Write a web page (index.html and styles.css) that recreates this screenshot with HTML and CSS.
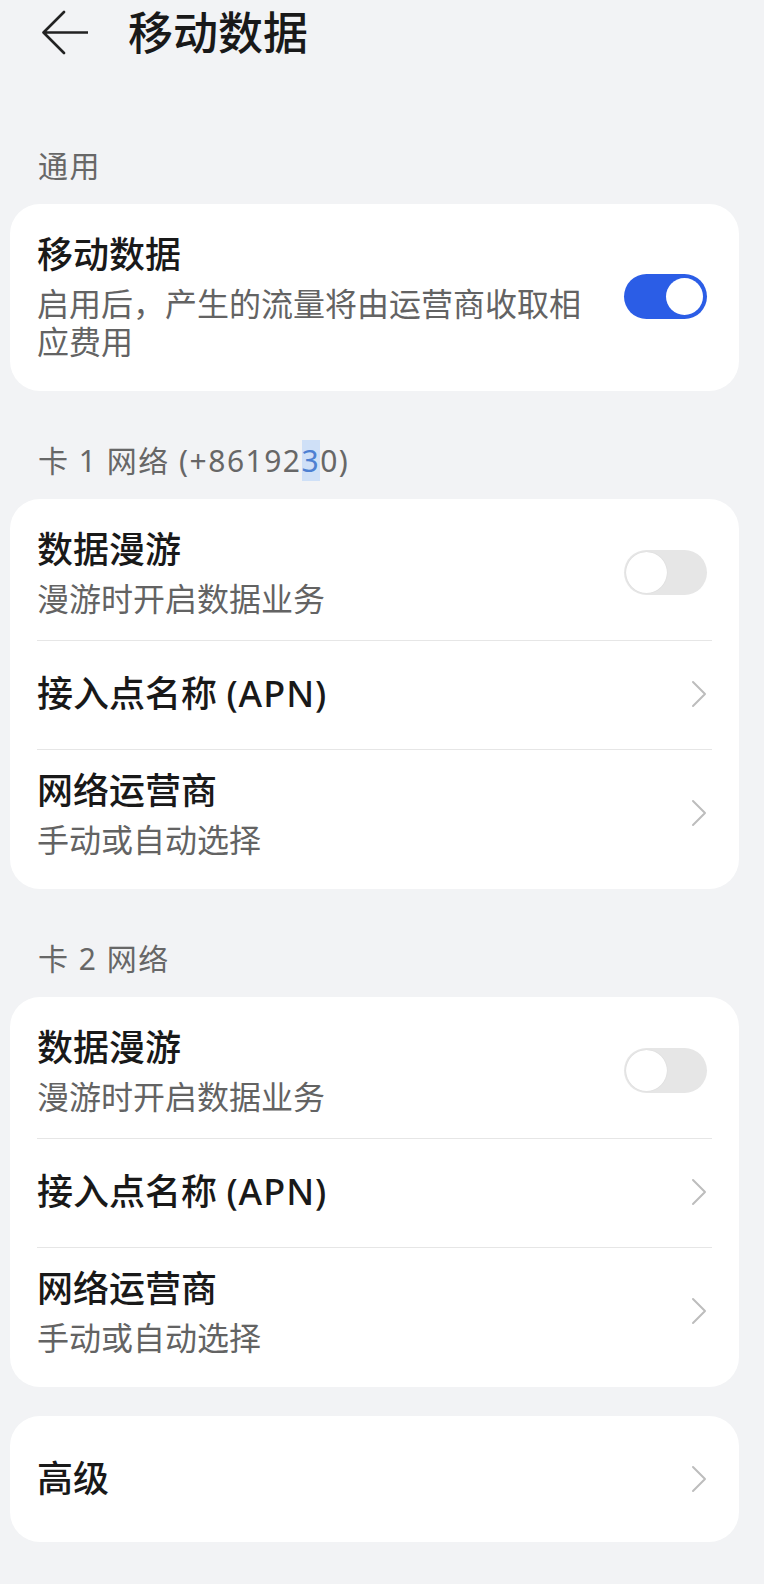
FILE: index.html
```html
<!DOCTYPE html>
<html lang="zh-CN">
<head>
    <meta charset="UTF-8">
    <meta name="viewport" content="width=device-width, initial-scale=1.0">
    <title>移动数据</title>
    <link rel="stylesheet" href="styles.css">
</head>
<body>
    <div class="page">
        <!-- Шапка -->
        <div class="topbar">
            <svg class="back" viewBox="0 0 46 46" width="46" height="46">
                <path d="M46 22.5H2M22 2L1.5 22.5L22 43" fill="none" stroke="#222" stroke-width="2.6" stroke-linecap="round" stroke-linejoin="round"/>
            </svg>
            <h1>移动数据</h1>
        </div>

        <div class="label first">通用</div>
        <div class="card">
            <div class="row">
                <div class="text">
                    <div class="title">移动数据</div>
                    <div class="sub">启用后，产生的流量将由运营商收取相应费用</div>
                </div>
                <div class="switch on"><span class="knob"></span></div>
            </div>
        </div>

        <div class="label">卡 1 网络 (+86192<span class="sel">3</span>0)</div>
        <div class="card">
            <div class="row">
                <div class="text">
                    <div class="title">数据漫游</div>
                    <div class="sub">漫游时开启数据业务</div>
                </div>
                <div class="switch"><span class="knob"></span></div>
            </div>
            <div class="row single">
                <div class="text">
                    <div class="title">接入点名称 <span class="latin">(APN)</span></div>
                </div>
                <svg class="chev" viewBox="0 0 16 28" width="16" height="28"><path d="M2 2L14 14L2 26" fill="none" stroke="#bdbdbd" stroke-width="2" stroke-linecap="round" stroke-linejoin="round"/></svg>
            </div>
            <div class="row">
                <div class="text">
                    <div class="title">网络运营商</div>
                    <div class="sub">手动或自动选择</div>
                </div>
                <svg class="chev" viewBox="0 0 16 28" width="16" height="28"><path d="M2 2L14 14L2 26" fill="none" stroke="#bdbdbd" stroke-width="2" stroke-linecap="round" stroke-linejoin="round"/></svg>
            </div>
        </div>

        <div class="label">卡 2 网络</div>
        <div class="card">
            <div class="row">
                <div class="text">
                    <div class="title">数据漫游</div>
                    <div class="sub">漫游时开启数据业务</div>
                </div>
                <div class="switch"><span class="knob"></span></div>
            </div>
            <div class="row single">
                <div class="text">
                    <div class="title">接入点名称 <span class="latin">(APN)</span></div>
                </div>
                <svg class="chev" viewBox="0 0 16 28" width="16" height="28"><path d="M2 2L14 14L2 26" fill="none" stroke="#bdbdbd" stroke-width="2" stroke-linecap="round" stroke-linejoin="round"/></svg>
            </div>
            <div class="row">
                <div class="text">
                    <div class="title">网络运营商</div>
                    <div class="sub">手动或自动选择</div>
                </div>
                <svg class="chev" viewBox="0 0 16 28" width="16" height="28"><path d="M2 2L14 14L2 26" fill="none" stroke="#bdbdbd" stroke-width="2" stroke-linecap="round" stroke-linejoin="round"/></svg>
            </div>
        </div>

        <div class="card last">
            <div class="row single">
                <div class="text">
                    <div class="title">高级</div>
                </div>
                <svg class="chev" viewBox="0 0 16 28" width="16" height="28"><path d="M2 2L14 14L2 26" fill="none" stroke="#bdbdbd" stroke-width="2" stroke-linecap="round" stroke-linejoin="round"/></svg>
            </div>
        </div>
    </div>
</body>
</html>
```

FILE: styles.css
```css
/* Общие стили */
body {
    margin: 0;
    background: #f2f3f5;
    font-family: 'Noto Sans', 'Noto Sans CJK SC', sans-serif;
    color: #191919;
}

.page {
    padding: 0 25px 40px 10px;
}

/* Шапка */
.topbar {
    display: flex;
    align-items: center;
    height: 66px;
    padding-left: 32px;
}

.back {
    display: block;
}

.topbar h1 {
    margin: 0 0 0 40px;
    font-size: 45px;
    font-weight: 500;
    line-height: 60px;
}

/* Заголовки секций */
.label {
    margin: 50px 0 18px;
    padding-left: 28px;
    font-size: 30px;
    line-height: 40px;
    letter-spacing: 1.5px;
    color: #676767;
}

.label.first {
    margin-top: 80px;
}

.sel {
    background: #cfe0f7;
    color: #4d80d2;
}

/* Карточки */
.card {
    background: #fff;
    border-radius: 30px;
    padding: 10px 27px 8px;
}

.card.last {
    margin-top: 29px;
}

.row {
    display: flex;
    align-items: center;
    padding: 17px 0 22px;
}

.row + .row {
    border-top: 1px solid #e6e6e6;
}

.row.single {
    padding: 29px 0 31px;
}

.text {
    flex: 1;
    min-width: 0;
}

.title {
    font-size: 36px;
    font-weight: 500;
    line-height: 48px;
}

.title .latin {
    letter-spacing: 1px;
}

.sub {
    margin-top: 6px;
    font-size: 32px;
    line-height: 38px;
    color: #636363;
}

/* Переключатель */
.switch {
    flex: none;
    position: relative;
    width: 83px;
    height: 45px;
    margin: 0 5px 0 40px;
    border-radius: 23px;
    background: #e6e6e6;
}

.switch .knob {
    position: absolute;
    top: 2px;
    left: 2px;
    width: 41px;
    height: 41px;
    border-radius: 50%;
    background: #fff;
    box-shadow: 0 0 1px rgba(0, 0, 0, 0.15);
}

.switch.on {
    background: #2b5de6;
}

.switch.on .knob {
    top: 4px;
    left: auto;
    right: 4px;
    width: 37px;
    height: 37px;
    box-shadow: none;
}

.chev {
    flex: none;
    display: block;
    margin-right: 5px;
}
```
